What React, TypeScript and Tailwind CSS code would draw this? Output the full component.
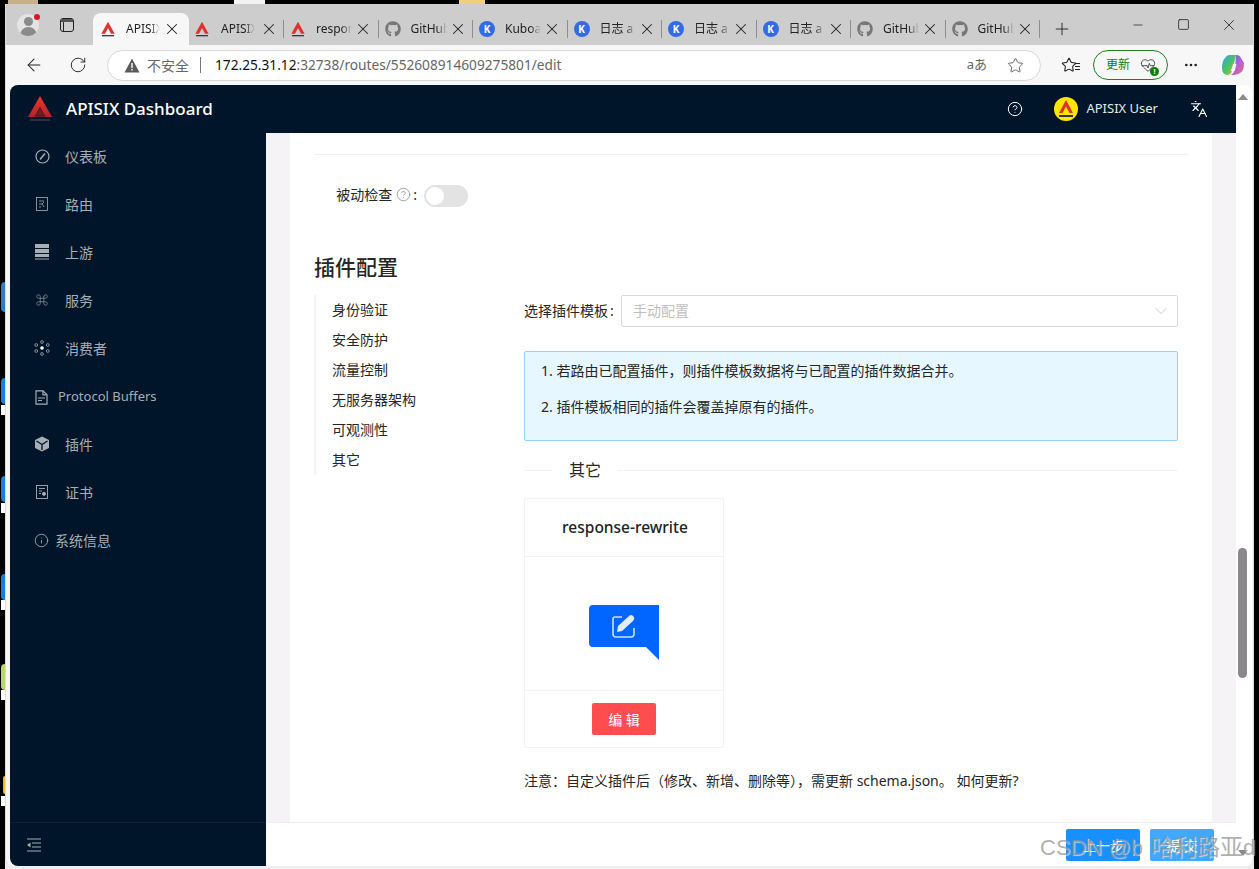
import {
  ArrowLeft,
  ChevronDown,
  CircleHelp,
  Command,
  HeartPulse,
  Info,
  Languages,
  Minus,
  MoreHorizontal,
  Plus,
  RotateCw,
  Square,
  Star,
  X,
} from "lucide-react";
import { FaGithub } from "react-icons/fa";

const cjk = "font-['Noto_Sans','Noto_Sans_CJK_SC',sans-serif]";
const tabText =
  "overflow-hidden whitespace-nowrap text-[12px] text-[#222] [mask-image:linear-gradient(to_right,black_70%,transparent)]";

const ApisixLogo = ({ size = 16 }: { size?: number }) => (
  <svg width={size} height={size} viewBox="0 0 24 24">
    <path d="M12 1 L22 19 L16.5 19 L12 10.5 L7.5 19 L2 19 Z" fill="#e0322c" />
    <rect x="3" y="21" width="18" height="2" fill="#3a3a3a" />
  </svg>
);

const KubeIcon = () => (
  <span className="flex h-[16px] w-[16px] items-center justify-center rounded-full bg-[#326ce5] text-[10px] font-bold text-white">
    K
  </span>
);

const GithubIcon = () => <FaGithub className="h-[16px] w-[16px] text-[#777]" />;

const tabs = [
  { title: "respon", icon: <ApisixLogo /> },
  { title: "GitHub", icon: <GithubIcon /> },
  { title: "Kuboard", icon: <KubeIcon /> },
  { title: "日志 a", icon: <KubeIcon /> },
  { title: "日志 a", icon: <KubeIcon /> },
  { title: "日志 a", icon: <KubeIcon /> },
  { title: "GitHub", icon: <GithubIcon /> },
  { title: "GitHub", icon: <GithubIcon /> },
];

const TabBar = () => (
  <div className="flex h-[41px] shrink-0 items-end bg-[#cdcdcd]">
    <div className="flex h-[41px] w-[34px] items-center justify-end">
      <div className="relative mr-[1px] h-[22px] w-[22px]">
        <div className="flex h-[22px] w-[22px] flex-col items-center overflow-hidden rounded-full bg-[#e4e4e4]">
          <span className="mt-[3px] h-[9px] w-[9px] shrink-0 rounded-full bg-[#8b8b8b]" />
          <span className="mt-[1px] h-[10px] w-[17px] shrink-0 rounded-t-full bg-[#8b8b8b]" />
        </div>
        <span className="absolute -right-[1px] top-0 h-[6px] w-[6px] rounded-full bg-[#e81123]" />
      </div>
    </div>
    <div className="flex h-[41px] w-[53px] items-center justify-center">
      <div className="flex h-[14px] w-[14px] flex-col rounded-[3px] border border-[#222]">
        <div className="h-[3px] w-full shrink-0 bg-[#555]" />
        <div className="h-full w-[3px] border-r border-[#222]" />
      </div>
    </div>
    <div className="flex h-[32px] w-[96px] items-center rounded-t-[8px] bg-[#f7f7f7] pl-[7px]">
      <ApisixLogo />
      <span className={`ml-[10px] w-[34px] ${tabText} ${cjk}`}>APISIX</span>
      <X className="ml-[3px] h-[18px] w-[18px] text-[#222]" strokeWidth={1.4} />
    </div>
    <div className="flex h-[32px] items-center">
      <div className="flex w-[94px] items-center pl-[5px]">
        <ApisixLogo />
        <span className={`ml-[11px] w-[34px] ${tabText} ${cjk}`}>APISIX</span>
        <X className="ml-[5px] h-[18px] w-[18px] text-[#222]" strokeWidth={1.4} />
      </div>
      {tabs.map((tab, index) => (
        <div key={index} className="flex h-[18px] w-[94.5px] items-center border-l border-[#8e8e8e] pl-[6px]">
          {tab.icon}
          <span className={`ml-[10px] w-[36px] ${tabText} ${cjk}`}>{tab.title}</span>
          <X className="ml-[2px] h-[18px] w-[18px] shrink-0 text-[#222]" strokeWidth={1.4} />
        </div>
      ))}
      <div className="flex h-[18px] items-center border-l border-[#8e8e8e] pl-[12px]">
        <Plus className="h-[20px] w-[20px] text-[#222]" strokeWidth={1.1} />
      </div>
    </div>
    <div className="ml-auto flex h-[41px] items-center pr-[15px]">
      <Minus className="h-[14px] w-[14px] text-[#222]" strokeWidth={1.25} />
      <Square className="ml-[32px] h-[13px] w-[13px] text-[#222]" strokeWidth={1.5} />
      <X className="ml-[30px] h-[18px] w-[18px] text-[#222]" strokeWidth={1.1} />
    </div>
  </div>
);

const CopilotIcon = () => (
  <svg width="24" height="24" viewBox="0 0 24 24">
    <defs>
      <linearGradient id="copilotLeft" x1="0" y1="0" x2="1" y2="1">
        <stop offset="0" stopColor="#2aa7e8" />
        <stop offset="0.55" stopColor="#4fc45c" />
        <stop offset="1" stopColor="#f5b731" />
      </linearGradient>
      <linearGradient id="copilotRight" x1="0" y1="0" x2="1" y2="1">
        <stop offset="0" stopColor="#3f6fe8" />
        <stop offset="0.5" stopColor="#b45fe0" />
        <stop offset="1" stopColor="#f06a5a" />
      </linearGradient>
    </defs>
    <path d="M8 2 H15 L11 18 Q10 22 6 22 Q1 21 1 15 Q1 8 4 5 Q6 2 8 2 Z" fill="url(#copilotLeft)" />
    <path d="M15 2 Q19 2 20 5 L23 10 Q23 18 19 20 Q16 22 10 22 Q13 20 14 16 Z" fill="url(#copilotRight)" />
    <path d="M12 11 H15.5 L13.5 18 H10 Z" fill="#fff" />
  </svg>
);

const Toolbar = () => (
  <div className="flex h-[40px] shrink-0 items-center bg-[#f7f7f7] pl-[18px]">
    <ArrowLeft className="h-[20px] w-[20px] text-[#222]" strokeWidth={1.25} />
    <RotateCw className="ml-[25px] h-[18px] w-[18px] text-[#222]" strokeWidth={1.25} />
    <div className={`ml-[20px] flex h-[31px] w-[934px] items-center rounded-full border border-[#d8d8d8] bg-white pl-[16px] pr-[16px] ${cjk}`}>
      <svg width="16" height="15" viewBox="0 0 16 15">
        <path d="M8 0.5 L15.5 14.5 H0.5 Z" fill="#5a5a5a" />
        <rect x="7.3" y="5" width="1.4" height="5" fill="#fff" />
        <rect x="7.3" y="11" width="1.4" height="1.5" fill="#fff" />
      </svg>
      <span className="ml-[7px] text-[14px] text-[#666]">不安全</span>
      <span className="ml-[11px] h-[16px] w-px bg-[#777]" />
      <span className="ml-[14px] text-[13.7px] text-[#111]">172.25.31.12</span>
      <span className="text-[13.7px] text-[#666]">:32738/routes/552608914609275801/edit</span>
      <span className="ml-auto text-[13px] text-[#666]">aあ</span>
      <Star className="ml-[20px] h-[17px] w-[17px] text-[#555]" strokeWidth={1.25} />
    </div>
    <div className="relative ml-[20px] h-[16px] w-[18px]">
      <Star className="h-[16px] w-[16px] text-[#222]" strokeWidth={1.6} />
      <span className="absolute -right-[1px] top-[6px] h-px w-[5px] bg-[#222]" />
      <span className="absolute -right-[1px] top-[9px] h-px w-[5px] bg-[#222]" />
      <span className="absolute -right-[1px] top-[12px] h-px w-[5px] bg-[#222]" />
    </div>
    <div className={`ml-[14px] flex h-[30px] w-[75px] items-center rounded-full border border-[#1d7f1d] pl-[12px] text-[12px] text-[#107c10] ${cjk}`}>
      更新
      <span className="relative ml-[10px]">
        <HeartPulse className="h-[16px] w-[16px] text-[#333]" strokeWidth={1.25} />
        <span className="absolute -bottom-[3px] -right-[3px] flex h-[9px] w-[9px] items-center justify-center rounded-full bg-[#107c10] text-[7px] font-bold leading-none text-white">!</span>
      </span>
    </div>
    <MoreHorizontal className="ml-[15px] h-[16px] w-[16px] text-[#222]" />
    <div className="ml-[22px]">
      <CopilotIcon />
    </div>
  </div>
);

const DashIcon = () => (
  <svg width="15" height="15" viewBox="0 0 15 15" fill="none" stroke="currentColor" strokeWidth="1.2">
    <circle cx="7.5" cy="7.5" r="6.5" />
    <path d="M5 10.5 L10 4.5" strokeWidth="1.5" />
  </svg>
);

const RouteIcon = () => (
  <svg width="12" height="14" viewBox="0 0 12 14" fill="none" stroke="currentColor" strokeWidth="0.8">
    <rect x="0.5" y="0.5" width="11" height="13" />
    <path d="M3 4 H8 M3 7 H6 L8 5 M6 7 L8 10 M3 10 H5" />
  </svg>
);

const UpstreamIcon = () => (
  <svg width="14" height="16" viewBox="0 0 14 16" fill="currentColor">
    <rect x="0" y="0" width="14" height="4" />
    <rect x="0" y="5" width="14" height="4" />
    <rect x="0" y="10" width="14" height="3" />
    <rect x="0" y="14.5" width="14" height="1" />
  </svg>
);

const ConsumerIcon = () => (
  <svg width="16" height="16" viewBox="0 0 16 16" fill="none" stroke="currentColor" strokeWidth="0.8">
    <circle cx="8" cy="8" r="1.8" fill="#fff" stroke="none" />
    <circle cx="8" cy="2" r="1.4" />
    <circle cx="8" cy="14" r="1.4" />
    <circle cx="2.2" cy="5" r="1.4" />
    <circle cx="13.8" cy="5" r="1.4" />
    <circle cx="2.2" cy="11" r="1.4" />
    <circle cx="13.8" cy="11" r="1.4" />
  </svg>
);

const ProtoIcon = () => (
  <svg width="13" height="15" viewBox="0 0 13 15" fill="none" stroke="currentColor" strokeWidth="1.2">
    <path d="M1 0.8 H8 L12 4.8 V14.2 H1 Z" />
    <path d="M3 8 H10 M3 10.5 H7" />
    <path d="M8 0.8 V4.8 H12" />
  </svg>
);

const PluginIcon = () => (
  <svg width="16" height="16" viewBox="0 0 16 16">
    <path d="M8 0.5 L15 4 V12 L8 15.5 L1 12 V4 Z" fill="currentColor" />
    <path d="M8 8.5 V14 M8 8.5 L2.5 5 M8 8.5 L13.5 5" stroke="#001529" strokeWidth="1.3" fill="none" />
  </svg>
);

const CertIcon = () => (
  <svg width="12" height="14" viewBox="0 0 12 14" fill="none" stroke="currentColor" strokeWidth="0.9">
    <rect x="0.5" y="0.5" width="11" height="13" />
    <path d="M3 3.5 H9 M3 6 H6 M3 8.5 H5" />
    <circle cx="8" cy="8.8" r="1.6" fill="currentColor" />
  </svg>
);

const CollapseIcon = () => (
  <svg width="14" height="14" viewBox="0 0 14 14" fill="currentColor">
    <rect x="0" y="0.5" width="14" height="1" />
    <rect x="5" y="4.5" width="9" height="1" />
    <rect x="5" y="8.5" width="9" height="1" />
    <rect x="0" y="12.5" width="14" height="1" />
    <path d="M0 7 L3.5 4.5 V9.5 Z" />
  </svg>
);

const navText = "pb-[2px] text-[14px]";

const navItems = [
  { label: "仪表板", icon: <DashIcon />, left: "pl-[24px]", gap: "ml-[15px]", text: navText },
  { label: "路由", icon: <RouteIcon />, left: "pl-[24px]", gap: "ml-[15px]", text: navText },
  { label: "上游", icon: <UpstreamIcon />, left: "pl-[24px]", gap: "ml-[15px]", text: navText },
  { label: "服务", icon: <Command className="h-[14px] w-[14px]" strokeWidth={1} />, left: "pl-[24px]", gap: "ml-[15px]", text: navText },
  { label: "消费者", icon: <ConsumerIcon />, left: "pl-[24px]", gap: "ml-[15px]", text: navText },
  { label: "Protocol Buffers", icon: <ProtoIcon />, left: "pl-[23px]", gap: "ml-[9px]", text: "text-[13px]" },
  { label: "插件", icon: <PluginIcon />, left: "pl-[24px]", gap: "ml-[15px]", text: navText },
  { label: "证书", icon: <CertIcon />, left: "pl-[24px]", gap: "ml-[15px]", text: navText },
  { label: "系统信息", icon: <Info className="h-[15px] w-[15px]" strokeWidth={1.4} />, left: "pl-[23px]", gap: "ml-[6px]", text: navText },
];

const Sidebar = () => (
  <aside className={`flex w-[256px] shrink-0 flex-col rounded-bl-[8px] bg-[#001529] text-[#a6adb4] ${cjk}`}>
    <nav className="flex flex-1 flex-col">
      {navItems.map((item) => (
        <div key={item.label} className={`flex h-[48px] items-center ${item.left} ${item.text}`}>
          <span className="flex w-[16px] justify-center text-[#a6adb4]">{item.icon}</span>
          <span className={item.gap}>{item.label}</span>
        </div>
      ))}
    </nav>
    <div className="flex h-[44px] items-center border-t border-[#0b2236] pl-[17px]">
      <span className="text-[#a6adb4]">
        <CollapseIcon />
      </span>
    </div>
  </aside>
);

const pluginGroups = ["身份验证", "安全防护", "流量控制", "无服务器架构", "可观测性", "其它"];

const PluginCard = () => (
  <div className="mt-[15px] flex h-[250px] w-[200px] flex-col rounded-[2px] border border-[#f5f2f5]">
    <div className="flex h-[58px] items-center justify-center border-b border-[#f5f2f5] pl-[2px] pt-[1px] text-[15.5px] font-medium text-[#222]">
      response-rewrite
    </div>
    <div className="flex flex-1 items-center justify-center pt-[18px]">
      <svg width="70" height="55" viewBox="0 0 70 55">
        <path d="M4 0 H70 V55 L57 42 H4 Q0 42 0 38 V4 Q0 0 4 0 Z" fill="#0066ff" />
        <path d="M33 12 H26 Q24 12 24 14 V29 Q24 32 27 32 H42 Q45 32 45 29 V23" stroke="#cfe0ff" strokeWidth="1.6" fill="none" />
        <path d="M28 27 L29 21 L40 11 Q42 9 44 11 L45 12 Q46 14 44 16 L33 26 Z" fill="#e4edff" />
      </svg>
    </div>
    <div className="flex h-[57px] items-center justify-center border-t border-[#f5f2f5]">
      <button className="h-[32px] w-[64px] rounded-[2px] bg-[#ff4d4f] text-[14px] text-white">编 辑</button>
    </div>
  </div>
);

const Content = () => (
  <div className={`flex-1 overflow-hidden bg-[#f6f3f6] px-[24px] text-[14px] text-[#262626] ${cjk}`}>
    <div className="h-full bg-white px-[24px]">
      <div className="h-[22px] border-b border-[#f0f0f0]" />
      <div className="mt-[30px] flex h-[22px] items-center">
        <div className="flex w-[110px] items-center justify-end pb-[3px]">
          被动检查
          <CircleHelp className="ml-[4px] h-[15px] w-[15px] text-[#8c8c8c]" strokeWidth={1.25} />
          <span className="ml-[2px] mr-[7px]">:</span>
        </div>
        <div className="flex h-[22px] w-[44px] items-center rounded-full bg-[#e3e3e3] pl-[2px]">
          <span className="h-[18px] w-[18px] rounded-full bg-white" />
        </div>
      </div>
      <h2 className="mt-[46px] mb-[14px] h-[28px] text-[21px] font-medium leading-[28px] text-[#262626]">插件配置</h2>
      <div className="flex">
        <ul className="h-[180px] w-[210px] border-l-2 border-[#f5f2f5]">
          {pluginGroups.map((group) => (
            <li key={group} className="flex h-[30px] items-center pb-[2px] pl-[16px]">{group}</li>
          ))}
        </ul>
        <div className="w-[654px]">
          <div className="flex h-[32px] items-center">
            <span className="w-[97px] shrink-0 whitespace-nowrap pb-[1px]">选择插件模板<span className="ml-[2px]">:</span></span>
            <div className="flex h-[32px] flex-1 items-center justify-between rounded-[2px] border border-[#d9d9d9] pl-[11px] pr-[6px] text-[#bfbfbf]">
              <span className="pb-[2px]">手动配置</span>
              <ChevronDown className="h-[20px] w-[20px] text-[#bfbfbf]" strokeWidth={1} />
            </div>
          </div>
          <div className="mt-[24px] h-[90px] rounded-[2px] border border-[#91d5ff] bg-[#e6f7ff] pl-[16px] pt-[8px]">
            <p className="h-[22px] leading-[22px]">1. 若路由已配置插件，则插件模板数据将与已配置的插件数据合并。</p>
            <p className="mt-[14px] h-[22px] leading-[22px]">2. 插件模板相同的插件会覆盖掉原有的插件。</p>
          </div>
          <div className="mt-[16px] flex h-[26px] items-center">
            <span className="h-px w-[28px] bg-[#f5f2f5]" />
            <span className="px-[17px] text-[16px]">其它</span>
            <span className="h-px flex-1 bg-[#f5f2f5]" />
          </div>
          <PluginCard />
          <p className="mt-[22px] h-[22px] whitespace-nowrap leading-[22px]">
            注意：自定义插件后（修改、新增、删除等），需更新 schema.json。 如何更新?
          </p>
        </div>
      </div>
    </div>
  </div>
);

const Footer = () => (
  <div className={`flex h-[44px] shrink-0 items-start justify-end gap-[10px] border-t border-[#eeeeee] bg-white pr-[22px] pt-[6px] text-[14px] text-white ${cjk}`}>
    <button className="h-[32px] w-[74px] rounded-[2px] bg-[#1890ff]">上一步</button>
    <button className="h-[32px] w-[64px] rounded-[2px] bg-[#40a9ff]">提 交</button>
  </div>
);

const Page = () => (
  <div className="flex min-h-0 flex-1 bg-[#f7f7f7] pl-[4px] pr-[1px]">
    <div className="flex w-[1226px] flex-col">
      <header className={`flex h-[48px] shrink-0 items-center rounded-tl-[8px] bg-[#001529] pl-[18px] text-white ${cjk}`}>
        <svg width="24" height="26" viewBox="0 0 24 26">
          <defs>
            <linearGradient id="logoRed" x1="0" y1="0" x2="0" y2="1">
              <stop offset="0" stopColor="#f0352c" />
              <stop offset="1" stopColor="#b3232a" />
            </linearGradient>
          </defs>
          <path d="M12 0 L24 21 L17.5 21 L12 11 L6.5 21 L0 21 Z" fill="url(#logoRed)" />
          <path d="M12 11 L17.5 21 L6.5 21 Z" fill="#6b1a1f" />
          <rect x="2" y="23" width="20" height="2" fill="#2b2f36" />
        </svg>
        <span className="ml-[14px] text-[17px] font-medium">APISIX Dashboard</span>
        <CircleHelp className="ml-auto h-[16px] w-[16px]" strokeWidth={1.5} />
        <svg className="ml-[31px]" width="24" height="24" viewBox="0 0 24 24">
          <circle cx="12" cy="12" r="12" fill="#ffe600" />
          <path d="M12 3 L19 16 H15.5 L12 9.5 L8.5 16 H5 Z" fill="#e0322c" />
          <rect x="5" y="18" width="14" height="2" fill="#333" />
        </svg>
        <span className="ml-[8px] text-[13px] text-[#e6e8ea]">APISIX User</span>
        <Languages className="ml-[32px] mr-[28px] h-[18px] w-[18px]" strokeWidth={1.5} />
      </header>
      <div className="flex min-h-0 flex-1">
        <Sidebar />
        <div className="flex min-w-0 flex-1 flex-col">
          <Content />
          <Footer />
        </div>
      </div>
    </div>
    <div className="relative w-[16px] rounded-tr-[8px] bg-white">
      <span className="absolute left-[2px] top-[9px] h-0 w-0 border-x-[5px] border-b-[6px] border-x-transparent border-b-[#8a8a8a]" />
      <span className="absolute left-[2px] top-[463px] h-[130px] w-[9px] rounded-full bg-[#8b888b]" />
      <span className="absolute bottom-[10px] left-[2px] h-0 w-0 border-x-[5px] border-t-[6px] border-x-transparent border-t-[#8a8a8a]" />
    </div>
  </div>
);

const desktopBits = [
  "left-[1px] top-[282px] h-[30px] w-[4px] rounded-l-full bg-[#2f7fc8]",
  "left-[1px] top-[378px] h-[26px] w-[4px] rounded-l-full bg-[#1a7fd6]",
  "left-[1px] top-[405px] h-[10px] w-[4px] bg-white",
  "left-[1px] top-[476px] h-[26px] w-[4px] rounded-l-full bg-[#1a7fd6]",
  "left-[1px] top-[503px] h-[10px] w-[4px] bg-white",
  "left-[1px] top-[574px] h-[26px] w-[4px] rounded-l-full bg-[#1a7fd6]",
  "left-[1px] top-[600px] h-[10px] w-[4px] bg-white",
  "left-[1px] top-[664px] h-[26px] w-[4px] rounded-l-full bg-[#b7d86a]",
  "left-[1px] top-[690px] h-[10px] w-[4px] bg-white",
  "left-[3px] top-[776px] h-[18px] w-[2px] rounded-l-full bg-[#e8b931]",
  "left-[1px] top-[796px] h-[10px] w-[4px] bg-white",
  "left-[8px] top-0 h-[4px] w-[30px] bg-[#c9b088]",
  "left-[234px] top-0 h-[4px] w-[31px] bg-[#f2f2f2]",
  "left-[459px] top-0 h-[4px] w-[26px] bg-[#f0cf7a]",
];

export default function App() {
  return (
    <div className="relative h-[869px] w-[1259px] overflow-hidden bg-black pl-[5px] pr-[5px] pt-[4px]">
      {desktopBits.map((bit) => (
        <span key={bit} className={`absolute ${bit}`} />
      ))}
      <div className="h-[865px] bg-[#eeeeee]">
        <div className="flex h-[862px] flex-col overflow-hidden rounded-b-[8px] border-l border-r border-[#dcdcdc] bg-[#f7f7f7]">
          <TabBar />
          <Toolbar />
          <Page />
        </div>
      </div>
      <div className="absolute left-[1040px] top-[830px] whitespace-nowrap font-['Liberation_Sans','Noto_Sans_CJK_SC',sans-serif] text-[22px] leading-[34px] text-[#8c8c8c]/70 [text-shadow:1px_1px_1px_rgba(255,255,255,0.6)]">
        CSDN @b<span className="ml-[8px] text-[23px]">哈利路亚</span>d
      </div>
    </div>
  );
}
